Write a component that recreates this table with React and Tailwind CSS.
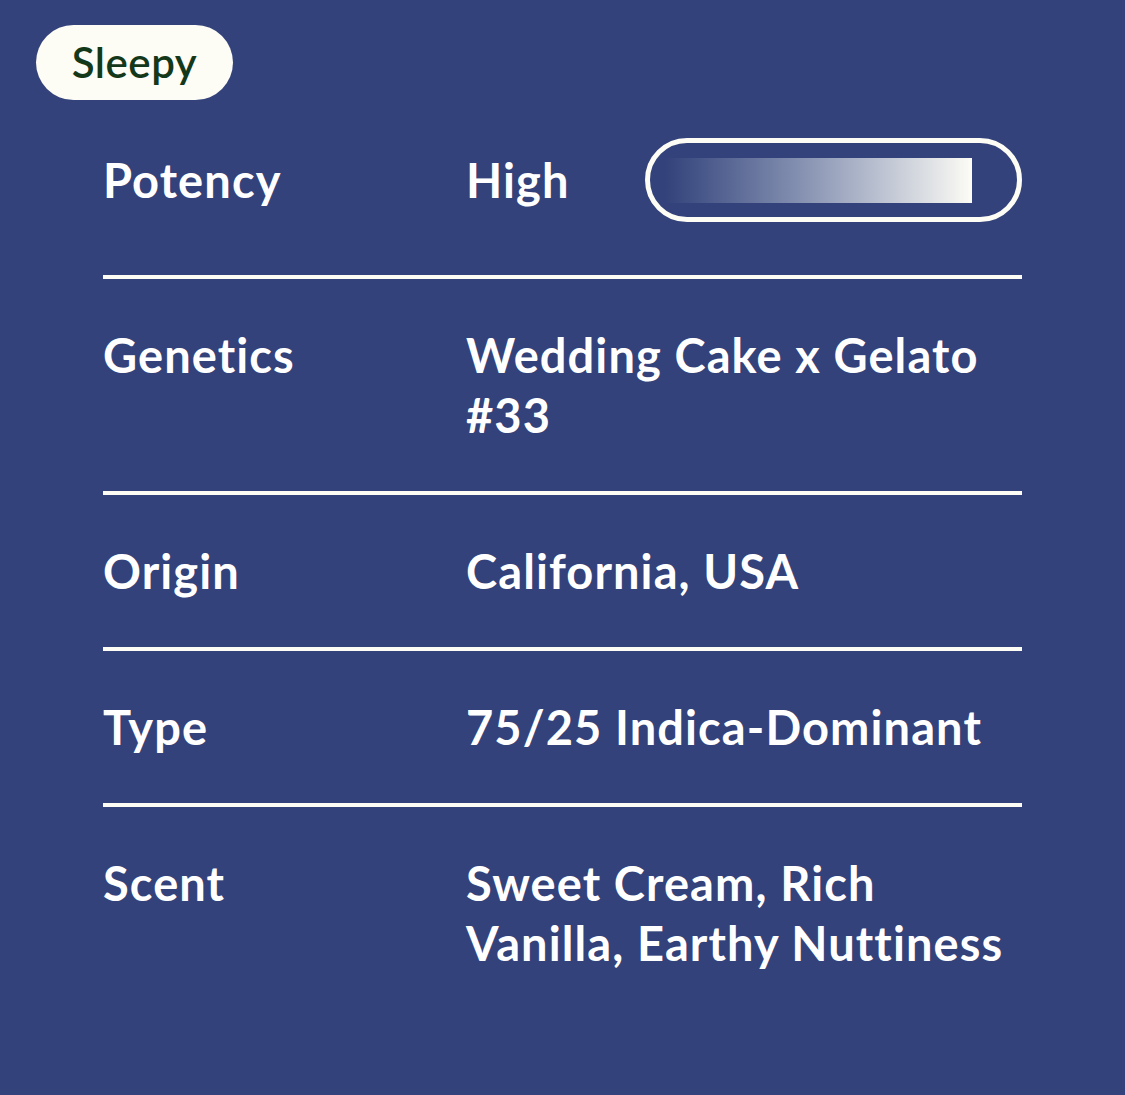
import React from 'react';

const rows = [
  { label: 'Genetics', value: ['Wedding Cake x Gelato', '#33'] },
  { label: 'Origin', value: ['California, USA'] },
  { label: 'Type', value: ['75/25 Indica-Dominant'] },
  { label: 'Scent', value: ['Sweet Cream, Rich', 'Vanilla, Earthy Nuttiness'] },
];

const font = { fontFamily: 'Lato, "Noto Sans", sans-serif' };

export default function App() {
  return (
    <div className="w-[1125px] h-[1095px] bg-[#33427a] text-white overflow-hidden [font-variant-ligatures:none]" style={font}>
      <div className="pt-[25px] pl-[36px]">
        <span className="inline-flex items-center justify-center h-[75px] w-[197px] rounded-full bg-[#fdfcf5] text-[#14381a] text-[42px] tracking-[0.5px] font-semibold">
          Sleepy
        </span>
      </div>

      <div className="px-[103px] text-[47px] font-bold leading-[60px] tracking-[1.1px]">
        {/* Potency */}
        <div className="flex items-center pt-[38px] pb-[53px] border-b-4 border-[#fdfcf5]">
          <div className="w-[363px]">Potency</div>
          <div className="w-[179px]">High</div>
          <div className="flex-1 h-[84px] rounded-full border-[5px] border-[#fdfcf5] flex items-center pl-[15px] pr-[45px]">
            <div className="h-[45px] w-full bg-gradient-to-r from-[#33427a] to-[#fdfcf5]" />
          </div>
        </div>

        {rows.map((r, i) => (
          <div
            key={r.label}
            className={`flex py-[46px] ${i < rows.length - 1 ? 'border-b-4 border-[#fdfcf5]' : ''}`}
          >
            <div className="w-[363px] shrink-0">{r.label}</div>
            <div className="flex-1">
              {r.value.map((line) => (
                <div key={line}>{line}</div>
              ))}
            </div>
          </div>
        ))}
      </div>
    </div>
  );
}
